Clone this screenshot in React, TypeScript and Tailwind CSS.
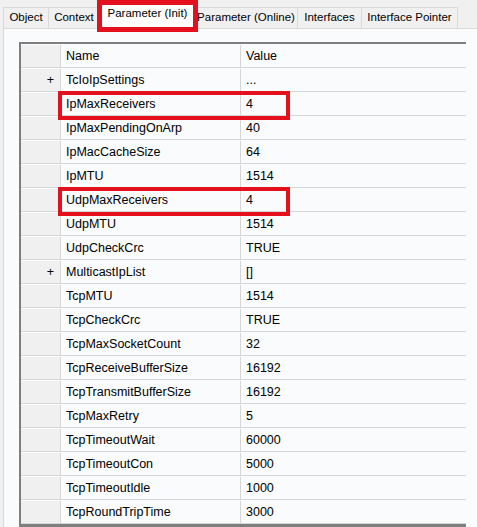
import React from 'react';

const tabs: { label: string; w: number }[] = [
  { label: 'Object', w: 46 },
  { label: 'Context', w: 51 },
  { label: 'Parameter (Init)', w: 97 },
  { label: 'Parameter (Online)', w: 103 },
  { label: 'Interfaces', w: 64 },
  { label: 'Interface Pointer', w: 96 },
];

const rows: { name: string; value: string; plus?: boolean }[] = [
  { name: 'TcIoIpSettings', value: '...', plus: true },
  { name: 'IpMaxReceivers', value: '4' },
  { name: 'IpMaxPendingOnArp', value: '40' },
  { name: 'IpMacCacheSize', value: '64' },
  { name: 'IpMTU', value: '1514' },
  { name: 'UdpMaxReceivers', value: '4' },
  { name: 'UdpMTU', value: '1514' },
  { name: 'UdpCheckCrc', value: 'TRUE' },
  { name: 'MulticastIpList', value: '[]', plus: true },
  { name: 'TcpMTU', value: '1514' },
  { name: 'TcpCheckCrc', value: 'TRUE' },
  { name: 'TcpMaxSocketCount', value: '32' },
  { name: 'TcpReceiveBufferSize', value: '16192' },
  { name: 'TcpTransmitBufferSize', value: '16192' },
  { name: 'TcpMaxRetry', value: '5' },
  { name: 'TcpTimeoutWait', value: '60000' },
  { name: 'TcpTimeoutCon', value: '5000' },
  { name: 'TcpTimeoutIdle', value: '1000' },
  { name: 'TcpRoundTripTime', value: '3000' },
];

export default function App() {
  return (
    <div
      className="relative h-[527px] w-[477px] overflow-hidden bg-[#f0f0f0] text-[12px] text-black"
      style={{ fontFamily: '"Liberation Sans", Arial, sans-serif' }}
    >
      {/* tab strip */}
      <div className="flex h-[28px] items-end pl-[3px]">
        {tabs.map((t, i) =>
          i === 2 ? (
            <div
              key={t.label}
              style={{ width: t.w }}
              className="relative z-10 -mx-[1px] flex h-[27px] shrink-0 items-center justify-center whitespace-nowrap border border-b-0 border-[#d9d9d9] bg-white pb-[3px] text-[11.5px]"
            >
              {t.label}
              <div className="absolute -left-[3px] -right-[3px] -top-[2px] -bottom-[4px] border-[5px] border-[#e5101e]" />
            </div>
          ) : (
            <div
              key={t.label}
              style={{ width: t.w }}
              className="flex h-[21px] shrink-0 items-center justify-center whitespace-nowrap border border-b-0 border-l-0 border-[#d9d9d9] bg-[#f0f0f0] text-[11.5px] first:border-l"
            >
              {t.label}
            </div>
          )
        )}
      </div>

      {/* panel */}
      <div className="ml-[3px] h-full border-l border-t border-[#d9d9d9] bg-[#f9fbfd] pl-[15px] pt-[13px] text-[12.5px]">
        <div className="relative w-[447px] border-l-2 border-t-2 border-b-[3px] border-[#7f7f7f]">
          <div className="grid h-[24px] grid-cols-[40px_180px_1fr] border-b border-[#d6d6d6] pt-[1px]">
            <div className="border-r border-[#d6d6d6] bg-[#f0f0f0]" />
            <div className="flex items-center border-r border-[#d6d6d6] pl-[5px]">Name</div>
            <div className="flex items-center pl-[5px]">Value</div>
          </div>
          {rows.map((r) => (
            <div key={r.name} className="grid h-[24px] grid-cols-[40px_180px_1fr] border-b border-[#d6d6d6] pt-[1px] last:border-b-0">
              <div className="flex items-center justify-end border-r border-[#d6d6d6] bg-[#f0f0f0] pr-[6px]">
                {r.plus ? '+' : ''}
              </div>
              <div className="flex items-center border-r border-[#d6d6d6] pl-[5px]">{r.name}</div>
              <div className="flex items-center pl-[5px]">{r.value}</div>
            </div>
          ))}
          <div className="absolute left-[37px] top-[47px] h-[29px] w-[232px] border-[4px] border-[#e5101e]" />
          <div className="absolute left-[37px] top-[143px] h-[29px] w-[232px] border-[4px] border-[#e5101e]" />
        </div>
      </div>
    </div>
  );
}
